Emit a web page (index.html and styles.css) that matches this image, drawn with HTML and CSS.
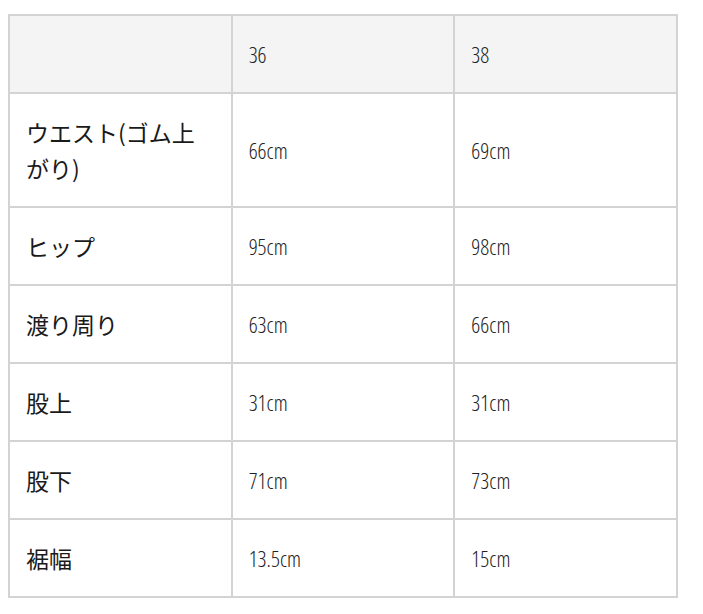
FILE: index.html
```html
<!DOCTYPE html>
<html lang="ja">
<head>
<meta charset="utf-8">
<link rel="stylesheet" href="styles.css">
</head>
<body>
<table class="size-table">
  <tr class="head">
    <td></td><td class="num">36</td><td class="num">38</td>
  </tr>
  <tr>
    <td class="label">ウエスト(ゴム上がり)</td><td class="num">66cm</td><td class="num">69cm</td>
  </tr>
  <tr>
    <td class="label">ヒップ</td><td class="num">95cm</td><td class="num">98cm</td>
  </tr>
  <tr>
    <td class="label">渡り周り</td><td class="num">63cm</td><td class="num">66cm</td>
  </tr>
  <tr>
    <td class="label">股上</td><td class="num">31cm</td><td class="num">31cm</td>
  </tr>
  <tr>
    <td class="label">股下</td><td class="num">71cm</td><td class="num">73cm</td>
  </tr>
  <tr>
    <td class="label">裾幅</td><td class="num">13.5cm</td><td class="num">15cm</td>
  </tr>
</table>
</body>
</html>
```
FILE: styles.css
```css
body {
  margin: 8px;
  background: #fff;
}
.size-table {
  margin-top: 6px;
  width: 670px;
  table-layout: fixed;
  border-collapse: collapse;
  border: 2px solid #d3d3d3;
  font-family: "Open Sans", "Noto Sans CJK JP", sans-serif;
  font-size: 22px;
  line-height: 36px;
  color: #222;
}
.size-table td {
  border: 2px solid #d3d3d3;
  padding: 20px 16px;
  vertical-align: middle;
  word-break: break-all;
}
.head td {
  background: #f4f4f4;
}
.num {
  font-weight: 300;
  font-stretch: 75%;
  font-size: 22px;
}
.label {
  font-family: "Noto Sans CJK JP", sans-serif;
  font-weight: 400;
  font-size: 23px;
  color: #1a1a1a;
}
```
